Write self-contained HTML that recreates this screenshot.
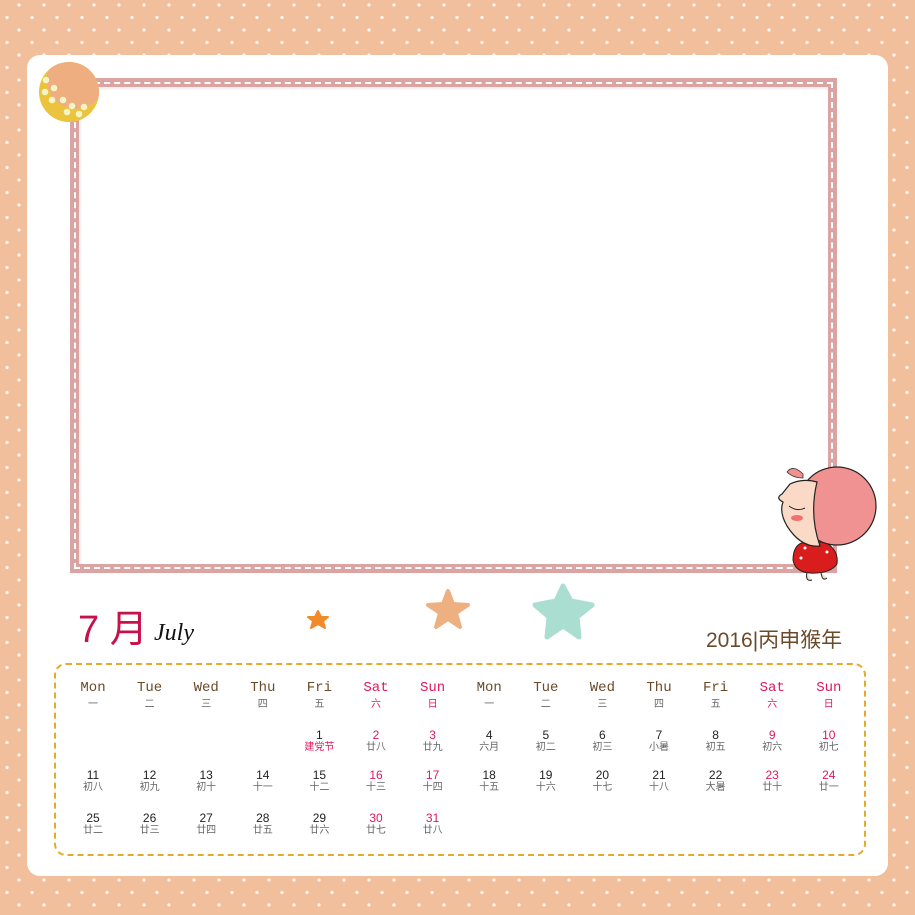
<!DOCTYPE html>
<html><head><meta charset="utf-8"><style>
*{margin:0;padding:0;box-sizing:border-box}
body{width:915px;height:915px;position:relative;overflow:hidden;background-color:#f2bf9c;
background-image:radial-gradient(circle,rgba(255,255,255,.85) 1.4px,transparent 1.9px),radial-gradient(circle,rgba(255,255,255,.85) 1.4px,transparent 1.9px);
background-size:25px 25px,25px 25px;background-position:6.5px -7.5px,-5.5px 5px;
font-family:"Liberation Sans","Noto Sans CJK SC",sans-serif}
.card{position:absolute;left:27px;top:55px;width:861px;height:821px;background:#fff;border-radius:13px}
.band{position:absolute;left:70px;top:78px;width:767px;height:495px;background:#dca3a3}
.dash{position:absolute;left:74px;top:82px;width:759px;height:487px;border:2px dashed #fff}
.inner{position:absolute;left:79px;top:87px;width:749px;height:477px;background:#fff;box-shadow:inset 2px 2px 2px rgba(0,0,0,.08)}
.box{position:absolute;left:54px;top:663px;width:812px;height:193px;border:2px dashed #e6a928;border-radius:12px}
.c{position:absolute;width:56px;text-align:center;line-height:1}
.h{font-size:14px;color:#6b4a2a;font-family:"Liberation Mono","WenQuanYi Zen Hei",monospace}
.s{font-size:10px;color:#666}
.n{font-size:12px;color:#222}
.r{color:#e0185e!important}
.t{position:absolute}
</style></head><body>
<div class="card"></div>
<div class="band"></div><div class="dash"></div><div class="inner"></div>
<svg style="position:absolute;left:38px;top:60px" width="64" height="64" viewBox="0 0 64 64">
<defs><clipPath id="cc"><circle cx="31" cy="32" r="30"/></clipPath></defs>
<g clip-path="url(#cc)">
<rect width="64" height="64" fill="#ecc33c"/>
<circle cx="38" cy="20" r="29" fill="#eeae80"/>
</g>
<g fill="#f3f5c4"><circle cx="8" cy="20" r="3.3"/><circle cx="7" cy="32" r="3.3"/><circle cx="16" cy="28" r="3.3"/><circle cx="25" cy="40" r="3.3"/><circle cx="14" cy="40" r="3.3"/><circle cx="34" cy="46" r="3.3"/><circle cx="29" cy="52" r="3.3"/><circle cx="46" cy="47" r="3.3"/><circle cx="41" cy="54" r="3.3"/></g>
</svg>
<!-- girl -->
<svg style="position:absolute;left:765px;top:460px" width="120" height="125" viewBox="0 0 120 125">
<path d="M38 14 Q28 4 22 12 Q28 18 38 18Z" fill="#f09090" stroke="#333" stroke-width=".8"/>
<path d="M40 82 Q28 84 28 100 Q30 112 45 113 Q65 114 72 104 Q74 90 60 82Z" fill="#d91c1c" stroke="#222"/>
<circle cx="36" cy="98" r="1.5" fill="#fff"/><circle cx="62" cy="92" r="1.5" fill="#fff"/><circle cx="40" cy="88" r="1.5" fill="#fff"/>
<path d="M42 112 Q40 122 47 120 M56 112 Q57 122 62 118" fill="#f6e1cc" stroke="#222"/>
<circle cx="72" cy="46" r="39" fill="#f09292" stroke="#222" stroke-width="1.2"/>
<path d="M25 24 Q38 18 52 22 Q44 55 55 86 Q36 88 22 66 Q14 52 18 42 Q10 38 17 34Z" fill="#fbd9c7" stroke="#222" stroke-width="1.2"/>
<path d="M24 46 Q32 52 40 48" fill="none" stroke="#222"/>
<ellipse cx="32" cy="58" rx="6" ry="3" fill="#f07070"/>
</svg>
<!-- stars -->
<svg style="position:absolute;left:300px;top:580px" width="310" height="65" viewBox="0 0 310 65">
<polygon points="18,31 21,37 28,37 23,41 25,48 18,44 11,48 13,41 8,37 15,37" fill="#f08a2a" stroke="#f08a2a" stroke-width="2" stroke-linejoin="round"/>
<polygon points="148,11 153,24 168,25 156,33 160,47 148,39 136,47 140,33 128,25 143,24" fill="#eeb080" stroke="#eeb080" stroke-width="4" stroke-linejoin="round"/>
<polygon points="263,6 271,21 292,25 277,37 279,57 263,46 247,57 249,37 235,25 256,21" fill="#a9ded0" stroke="#a9ded0" stroke-width="5" stroke-linejoin="round"/>
</svg>
<div class="t" style="left:78px;top:606px;font-size:38px;color:#c8104a;font-family:'Liberation Sans','WenQuanYi Zen Hei',sans-serif;line-height:48px">7&nbsp;月</div>
<div class="t" style="left:154px;top:620px;font-size:24px;color:#111;font-family:'Liberation Serif',serif;font-style:italic">July</div>
<div class="t" style="left:706px;top:624px;font-size:21px;color:#6b4a2a;font-family:'Liberation Sans','WenQuanYi Zen Hei',sans-serif">2016|丙申猴年</div>
<div class="box"></div>
<div id="g"></div>
<script>
var L=65,W=56.6,h="";
var d=["Mon","Tue","Wed","Thu","Fri","Sat","Sun"],z=["一","二","三","四","五","六","日"];
for(var i=0;i<14;i++){var x=L+i*W,r=(i%7>4)?" r":"";
h+='<div class="c h'+r+'" style="left:'+x+'px;top:681px">'+d[i%7]+'</div>';
h+='<div class="c s'+r+'" style="left:'+x+'px;top:700px">'+z[i%7]+'</div>';}
var lu=["建党节","廿八","廿九","六月","初二","初三","小暑","初五","初六","初七","初八","初九","初十","十一","十二","十三","十四","十五","十六","十七","十八","大暑","廿十","廿一","廿二","廿三","廿四","廿五","廿六","廿七","廿八"];
var rows=[[729,743],[769,783],[812,826]];
for(var n=1;n<=31;n++){var row,col;
if(n<=10){row=0;col=n+3}else if(n<=24){row=1;col=n-11}else{row=2;col=n-25}
var x=L+col*W,red=(col%7>4)?" r":"";
h+='<div class="c n'+red+'" style="left:'+x+'px;top:'+rows[row][0]+'px">'+n+'</div>';
h+='<div class="c s'+(n==1?" r":"")+'" style="left:'+x+'px;top:'+rows[row][1]+'px">'+lu[n-1]+'</div>';}
document.getElementById("g").innerHTML=h;
</script>
</body></html>
